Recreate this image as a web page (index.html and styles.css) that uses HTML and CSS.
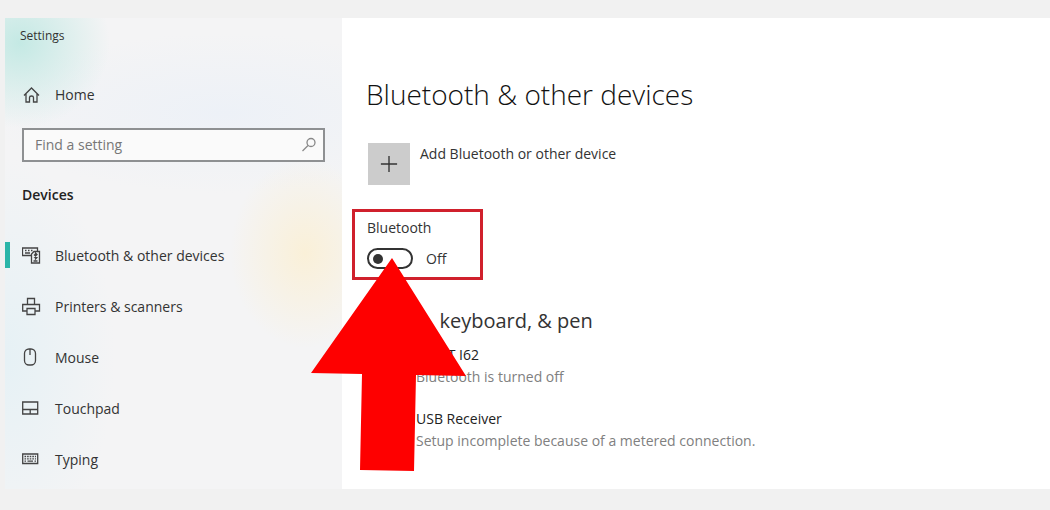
FILE: index.html
```
<!DOCTYPE html>
<html lang="en">
<head>
    <meta charset="UTF-8">
    <meta name="viewport" content="width=device-width, initial-scale=1.0">
    <title>Settings</title>

    <link rel="stylesheet" href="styles.css">
</head>
<body>

    <div class="window">
        <aside class="sidebar">
            <div class="app-name">Settings</div>

            <a class="nav-link home" href="#">
                <svg class="icon" viewBox="0 0 20 20">
                    <path d="M2 10.5 L9.500 3 L17 10.5 M4 9 V17 H7.500 V12.5 Q7.500 11 9.500 11 Q11.500 11 11.500 12.5 V17 H15 V9"/>
                </svg>
                Home
            </a>

            <div class="search">
                <input type="text" id="search" placeholder="Find a setting" aria-label="Find a setting">
                <svg class="icon search-icon" viewBox="0 0 20 20">
                    <circle cx="13" cy="7.5" r="4"/>
                    <path d="M10 10.5 L4.5 16"/>
                </svg>
            </div>

            <h2 class="group">Devices</h2>

            <nav class="nav">
                <a class="nav-link active" href="#">
                    <svg class="icon" viewBox="0 0 20 20">
                        <path d="M9 9.500 H0.500 V2 H15.500 V5 M3 4.500 H4.500 M6 4.500 H7.500 M9 4.500 H10.500 M3 7 H8"/>
                        <path d="M9.500 17 V8 L12 5.500 H17.500 V17 Z M12 8.500 L15 11.500 L13.500 13 V7 L15 8.500 L12 11.500 M11.500 15 H15.500"/>
                    </svg>
                    Bluetooth &amp; other devices
                </a>
                <a class="nav-link" href="#">
                    <svg class="icon" viewBox="0 0 20 20">
                        <path d="M5.500 7.500 V1.500 H12.500 V7.500 M5 14 H0.700 V7.500 H17.500 V14 H13 M5 11.500 H13 V17.500 H5 Z"/>
                    </svg>
                    Printers &amp; scanners
                </a>
                <a class="nav-link" href="#">
                    <svg class="icon" viewBox="0 0 20 20">
                        <rect x="2.500" y="1" width="11" height="16" rx="4.500"/>
                        <path d="M8 1 V7"/>
                    </svg>
                    Mouse
                </a>
                <a class="nav-link" href="#">
                    <svg class="icon" viewBox="0 0 20 20">
                        <path d="M0.700 3 H15.700 V15 H0.700 Z M0.700 10.500 H15.700 M8.200 10.500 V15"/>
                    </svg>
                    Touchpad
                </a>
                <a class="nav-link" href="#">
                    <svg class="icon" viewBox="0 0 20 20">
                        <path d="M0.700 4 H15.700 V13.500 H0.700 Z"/>
                        <path d="M2.500 6.500 H14 M2.500 8.800 H14" stroke-dasharray="1.6 1"/>
                        <path d="M2.500 11.200 H4 M5.500 11.200 H11 M12.500 11.200 H14"/>
                    </svg>
                    Typing
                </a>
            </nav>
        </aside>

        <main class="content">
            <h1>Bluetooth &amp; other devices</h1>

            <button class="add" type="button">
                <span class="add-icon">
                    <svg class="plus" viewBox="0 0 20 20">
                        <path d="M10 1 V19 M1 10 H19"/>
                    </svg>
                </span>
                <span class="add-text">Add Bluetooth or other device</span>
            </button>

            <div class="highlight">
                <label for="bluetooth">Bluetooth</label>
                <div class="switch">
                    <input type="checkbox" id="bluetooth">
                    <span>Off</span>
                </div>
                <svg class="arrow" viewBox="0 0 156 214">
                    <path d="M81 0 L155 118 L105 117 L103 213 L49 212 L51 116 L0 115 Z"/>
                </svg>
            </div>

            <h2 class="section">Mouse, keyboard, &amp; pen</h2>

            <ul class="devices">
                <li>
                    <div class="name">LIGHT I62</div>
                    <div class="status">Bluetooth is turned off</div>
                </li>
                <li>
                    <div class="name">USB Receiver</div>
                    <div class="status">Setup incomplete because of a metered connection.</div>
                </li>
            </ul>
        </main>
    </div>

</body>
</html>
```
FILE: styles.css
```
* {
    box-sizing: border-box;
}

body {
    margin: 0;
    min-height: 100vh;
    padding: 18px 0 21px 5px;
    display: flex;
    background-color: #f1f1f1;
    font-family: "Open Sans", "Noto Sans", sans-serif;
    font-size: 14px;
    line-height: 20px;
    color: #333;
}

h1, h2, ul {
    margin: 0;
    padding: 0;
}

.window {
    flex: 1;
    display: grid;
    grid-template-columns: 337px 1fr;
}

.sidebar {
    padding-top: 8px;
    background-color: #f4f4f5;
    background-image:
        radial-gradient(ellipse 90px 85px at 15px 25px, #c4e9e4, rgba(196, 233, 228, 0)),
        radial-gradient(ellipse 75px 95px at 300px 235px, #faf0d8, rgba(250, 240, 216, 0)),
        radial-gradient(ellipse 240px 80px at 220px 95px, #edf1f7, rgba(237, 241, 247, 0)),
        radial-gradient(ellipse 110px 200px at 0 340px, #e6f1f5, rgba(230, 241, 245, 0));
}

.app-name {
    padding-left: 15px;
    font-size: 12px;
}

.nav-link {
    height: 51px;
    padding-left: 12px;
    border-left: 5px solid transparent;
    display: flex;
    align-items: center;
    gap: 13px;
    color: #333;
    text-decoration: none;
}

.active {
    border-image: linear-gradient(transparent 12px, #2bb5a8 12px, #2bb5a8 38px, transparent 38px) 0 0 0 5;
}

.icon {
    width: 20px;
    height: 20px;
    fill: none;
    stroke: #444;
    stroke-width: 1.3;
}

.home {
    margin-top: 23px;
}

.search {
    height: 34px;
    margin: 8px 17px 0;
    padding: 0 5px 0 11px;
    border: 2px solid #8e9092;
    background-color: #fafafa;
    display: flex;
    align-items: center;
}

.search input {
    flex: 1;
    min-width: 0;
    padding: 0;
    border: none;
    outline: none;
    background: none;
    font: inherit;
}

.search input::placeholder {
    color: #777;
}

.search-icon {
    stroke: #888;
}

.group {
    margin: 23px 17px 0;
    font-size: 14px;
    font-weight: 600;
    color: #222;
}

.nav {
    margin-top: 25px;
}

.content {
    padding: 56px 26px 0 24px;
    background-color: #fff;
}

h1 {
    font-size: 28px;
    line-height: 40px;
    font-weight: 300;
    color: #111;
}

.add {
    margin: 29px 0 0 2px;
    padding: 0;
    border: none;
    background: none;
    display: flex;
    gap: 10px;
    font: inherit;
    color: #333;
    cursor: pointer;
}

.add-icon {
    width: 42px;
    height: 42px;
    background-color: #ccc;
    display: flex;
    align-items: center;
    justify-content: center;
}

.add-text {
    line-height: 22px;
}

.plus {
    width: 18px;
    height: 18px;
    stroke: #333;
    stroke-width: 1.5;
}

.highlight {
    position: relative;
    width: 131px;
    margin: 24px 0 0 -14px;
    padding: 6px 12px 8px;
    border: 3px solid #d0202c;
}

.highlight label {
    display: block;
}

.switch {
    margin-top: 10px;
    display: flex;
    align-items: center;
    gap: 13px;
}

.switch input {
    appearance: none;
    width: 46px;
    height: 21px;
    margin: 0;
    padding: 4px;
    border: 2px solid #333;
    border-radius: 11px;
}

.switch input::before {
    content: "";
    display: block;
    width: 10px;
    height: 10px;
    border-radius: 50%;
    background-color: #333;
}

.switch input:checked::before {
    margin-left: auto;
}

/* Arrow pointing at the switch */
.arrow {
    position: absolute;
    top: 46px;
    left: -44px;
    width: 156px;
    height: 214px;
    fill: #fe0000;
    pointer-events: none;
}

.section {
    margin-top: 26px;
    font-size: 20px;
    line-height: 30px;
    font-weight: 400;
}

.devices {
    margin-top: 8px;
    padding-left: 50px;
    list-style: none;
}

.devices li {
    margin-bottom: 20px;
    line-height: 22px;
}

.devices .name {
    color: #222;
}

.devices .status {
    color: #808080;
}
```
